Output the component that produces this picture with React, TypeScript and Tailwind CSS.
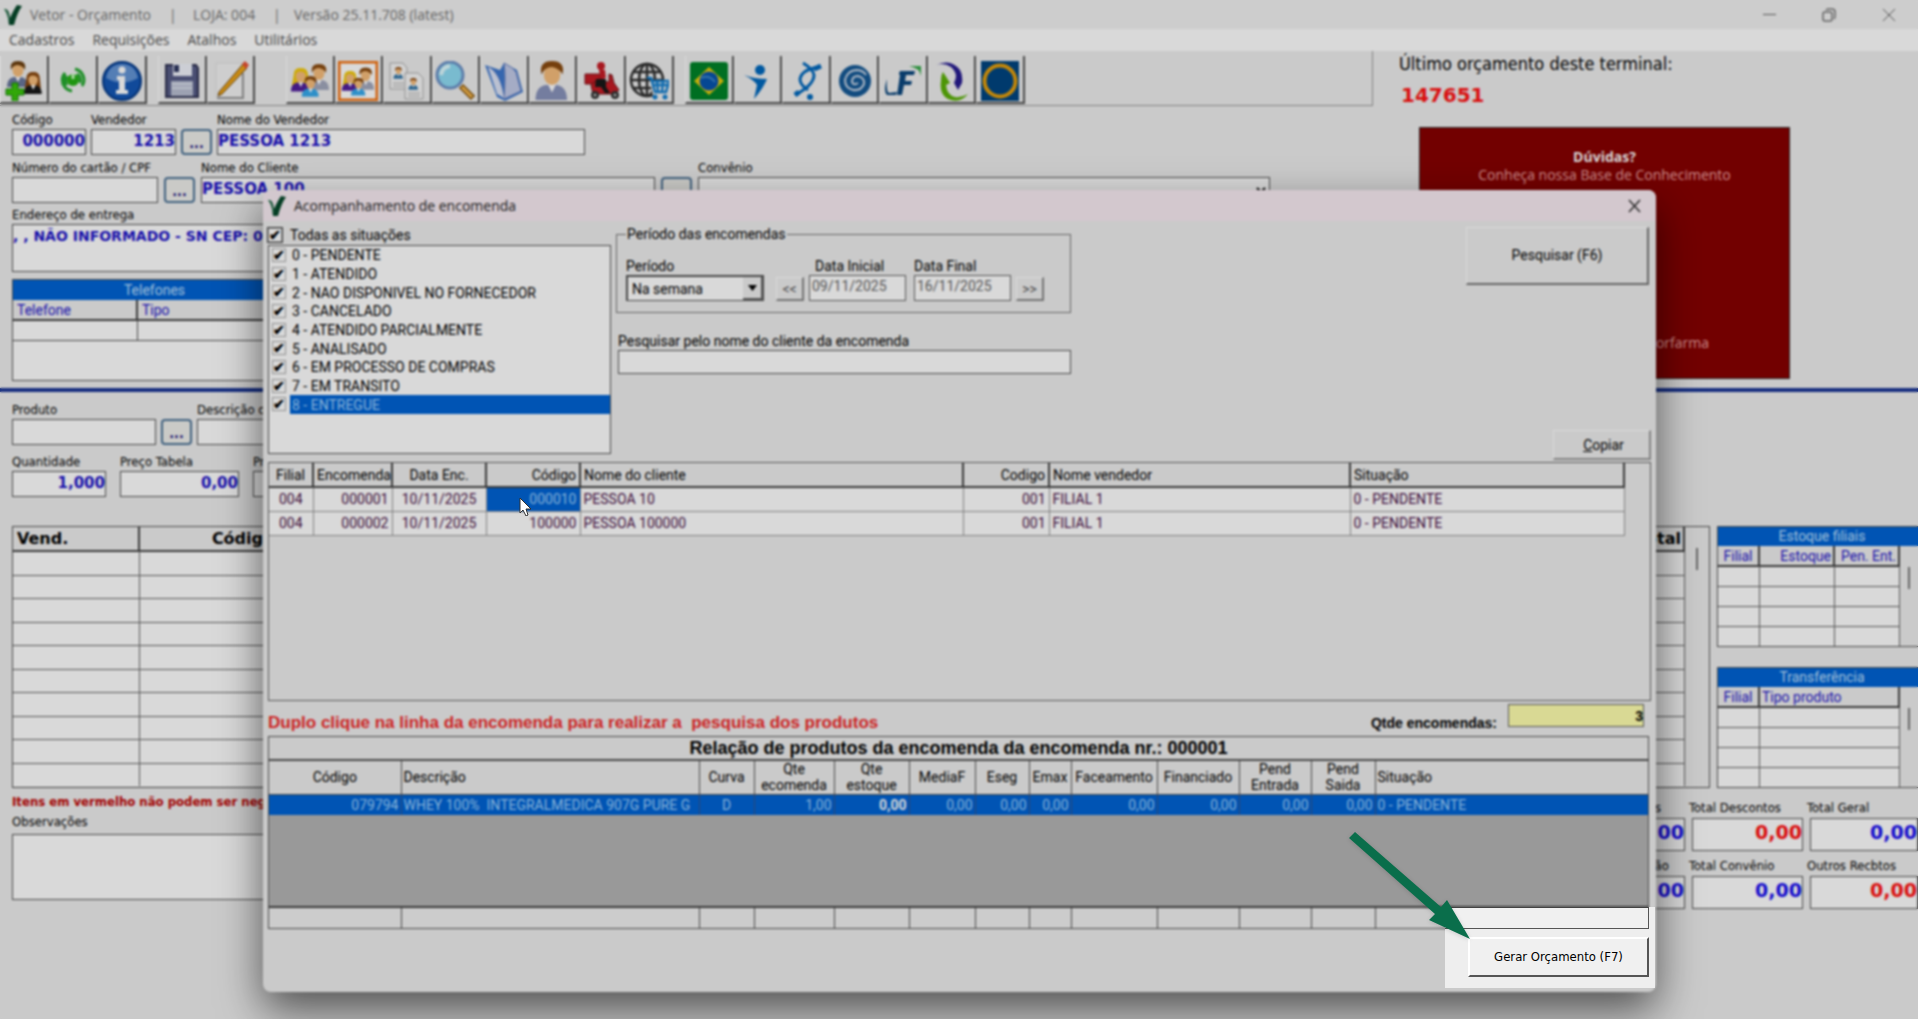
import type { ReactNode } from 'react'
import { clsx } from 'clsx'

const tahoma = "font-['DejaVu_Sans_Condensed','Noto_Sans',sans-serif]"
const sans = "font-['Roboto','Liberation_Sans',sans-serif]"

const situacoes = [
  '0 - PENDENTE',
  '1 - ATENDIDO',
  '2 - NAO DISPONIVEL NO FORNECEDOR',
  '3 - CANCELADO',
  '4 - ATENDIDO PARCIALMENTE',
  '5 - ANALISADO',
  '6 - EM PROCESSO DE COMPRAS',
  '7 - EM TRANSITO',
  '8 - ENTREGUE',
]

const encomendas = [
  { filial: '004', numero: '000001', data: '10/11/2025', codigo: '000010', cliente: 'PESSOA 10' },
  { filial: '004', numero: '000002', data: '10/11/2025', codigo: '100000', cliente: 'PESSOA 100000' },
]

const colunasProduto = [
  { titulo: 'Código', valor: '079794', w: 'w-[132px]', head: 'text-center', cell: 'text-right' },
  { titulo: 'Descrição', valor: 'WHEY 100%  INTEGRALMEDICA 907G PURE G', w: '', head: 'text-left', cell: 'text-left' },
  { titulo: 'Curva', valor: 'D', w: 'w-[55px]', head: 'text-center', cell: 'text-center' },
  { titulo: 'Qte ecomenda', valor: '1,00', w: 'w-[80px]', head: 'text-center', cell: 'text-right' },
  { titulo: 'Qte estoque', valor: '0,00', w: 'w-[75px]', head: 'text-center', cell: 'text-right font-bold text-white' },
  { titulo: 'MediaF', valor: '0,00', w: 'w-[66px]', head: 'text-center', cell: 'text-right' },
  { titulo: 'Eseg', valor: '0,00', w: 'w-[54px]', head: 'text-center', cell: 'text-right' },
  { titulo: 'Emax', valor: '0,00', w: 'w-[42px]', head: 'text-center', cell: 'text-right' },
  { titulo: 'Faceamento', valor: '0,00', w: 'w-[86px]', head: 'text-center', cell: 'text-right' },
  { titulo: 'Financiado', valor: '0,00', w: 'w-[82px]', head: 'text-center', cell: 'text-right' },
  { titulo: 'Pend Entrada', valor: '0,00', w: 'w-[72px]', head: 'text-center', cell: 'text-right' },
  { titulo: 'Pend Saida', valor: '0,00', w: 'w-[64px]', head: 'text-center', cell: 'text-right' },
  { titulo: 'Situação', valor: '0 - PENDENTE', w: 'w-[273px]', head: 'text-left', cell: 'text-left' },
]

export default function App() {
  return (
    <div className={clsx('relative h-screen overflow-hidden bg-[#eeeeee] text-sm text-black', tahoma)}>
      <TitleBar />
      <nav className="flex h-[22px] items-center gap-[18px] bg-white pl-[9px] font-['Open_Sans',sans-serif] text-sm text-[#555]">
        <button>Cadastros</button>
        <button>Requisições</button>
        <button>Atalhos</button>
        <button>Utilitários</button>
      </nav>

      <div className="flex">
        <div className="min-w-0 flex-1">
          <Toolbar />
          <CustomerForm />
        </div>
        <HelpPanel />
      </div>

      <div className="mt-[7px] h-1 bg-[#1a3696]" />

      <ProductArea />
      <OrderDialog />

      {/* Dimmed layer with an opening over the highlighted button */}
      <div className="pointer-events-none absolute inset-0 bg-black/15 backdrop-blur-[1px] [clip-path:polygon(evenodd,0_0,100%_0,100%_100%,0_100%,0_0,calc(100%-473px)_907px,calc(100%-263px)_907px,calc(100%-263px)_988px,calc(100%-473px)_988px,calc(100%-473px)_907px,0_0)]" />
      <svg className="pointer-events-none absolute top-[828px] right-[440px] h-[120px] w-[136px] drop-shadow-sm" viewBox="0 0 136 120" fill="#0a6e4b">
        <path d="M13 4 99 79 105 72 128 111 87 92 93 86 7 10Z" />
      </svg>
    </div>
  )
}

function TitleBar() {
  return (
    <header className="flex h-[29px] items-center bg-[#f1f1f1] pl-1 font-['Open_Sans',sans-serif] text-sm text-[#777]">
      <Check />
      <h1 className="ml-2 flex whitespace-pre">
        <span className="w-[139px]">Vetor - Orçamento</span>
        <span className="w-[24px]">|</span>
        <span className="w-[80px]">LOJA: 004</span>
        <span className="w-[21px]">|</span>
        <span>Versão 25.11.708 (latest)</span>
      </h1>
      <div className="ml-auto flex items-center gap-[46px] pr-[23px]">
        <button aria-label="Minimizar">
          <svg width="13" height="14" stroke="#666" fill="none"><path d="M0 6.500h13" /></svg>
        </button>
        <button aria-label="Restaurar">
          <svg width="14" height="14" stroke="#777" fill="none" strokeWidth="1.500"><rect x="1" y="4" width="9" height="9" rx="2" /><path d="M4 2q1-1 3-1h3q3 0 3 3v4q0 2-1 3" /></svg>
        </button>
        <button aria-label="Fechar">
          <svg width="13" height="14" stroke="#666" fill="none"><path d="M1 1l12 12M13 1 1 13" /></svg>
        </button>
      </div>
    </header>
  )
}

function Check() {
  return (
    <svg width="18" height="20" viewBox="0 0 18 20">
      <path d="M0 4q5-1 6 9Q10 4 13 0l5 1Q13 8 10 20H5Q4 9 0 4Z" fill="#07492b" />
      <path d="M0 4q4 2 5 12" fill="none" stroke="#57a27a" strokeWidth="1" />
    </svg>
  )
}

function ToolGroup({ className, icons }: { className: string; icons: [string, ReactNode][] }) {
  return (
    <div className={clsx('flex h-12', className)}>
      {icons.map(([name, icon]) => (
        <button
          key={name}
          aria-label={name}
          className="flex flex-1 items-center justify-center border-r-2 border-b-2 border-l border-r-[#555] border-b-[#555] border-l-white pt-1"
        >
          <svg className="h-10 w-10" viewBox="0 0 40 40">{icon}</svg>
        </button>
      ))}
    </div>
  )
}

function Toolbar() {
  return (
    <div className="flex h-[55px] items-end border-r border-b border-[#999] pb-px">
      <ToolGroup
        className="w-[147px]"
        icons={[
          ['Novo cliente', <><Person x={2} y={0} hair="#6b3f10" body="#69779c" /><Person x={19} y={11} s={0.85} hair="#8a4a12" body="#181818" long /><path d="M8 22h6v6h6v6h-6v6H8v-6H2v-6h6z" fill="#3bc50b" stroke="#14820a" /></>],
          ['Atualizar', <><circle cx="20" cy="19" r="6" fill="#25b014" /><path d="M20 13v5" stroke="#c8ffc0" strokeWidth="3" /><path d="M12 12a11 11 0 0 0 7 18M29 25a11 11 0 0 0-7-17M12 12q-3 6-2 12M14 24a8 8 0 0 1 0-9M27 22a8 8 0 0 0-3-9" fill="none" stroke="#25a82f" strokeWidth="3" /></>],
          ['Informações', <><circle cx="20" cy="20" r="19" fill="#1457b5" stroke="#073b88" strokeWidth="2" /><path d="M4 17Q7 3 20 3t16 14q-16 9-32 0Z" fill="#85aee2" opacity=".7" /><circle cx="20" cy="9" r="3.500" fill="#fff" /><path d="M15 15h8v14h3v4H14v-4h3V19h-2z" fill="#fff" /></>],
        ]}
      />
      <ToolGroup
        className="ml-[11px] w-[97px]"
        icons={[
          ['Salvar', <><path d="M4 4h30l2 3v29H4z" fill="#575d87" stroke="#303352" strokeWidth="2" /><path d="M11 3h19v12H11z" fill="#f0f3fb" /><path d="M12 4h5v7h-5z" fill="#303962" /><path d="M9 20h22v15H9z" fill="#b9bfd2" /><path d="M10 23h20M10 27h20" stroke="#d8dcea" strokeWidth="2" /></>],
          ['Editar', <><path d="M6 2h26v34H6z" fill="#f3f3f3" stroke="#ddd" /><path d="M7 37h26V12" stroke="#999" strokeWidth="2" fill="none" /><path d="M9 31 33 3l4 4-25 26-4 2z" fill="#eda416" stroke="#6a4511" /><path d="m32 3 3-3 4 4-3 4z" fill="#e85133" /></>],
        ]}
      />
      <ToolGroup
        className="ml-[31px] w-[388px]"
        icons={[
          ['Clientes', <Family />],
          ['Grupo de clientes', <><rect x="1" y="1" width="38" height="38" fill="#fff" stroke="#f57412" strokeWidth="3" /><g transform="translate(3 4) scale(.85)"><Family /></g></>],
          ['Copiar cadastro', <><path d="M3 2h13l4 5v21H3z" fill="#f7f7f7" stroke="#aaa" /><g transform="translate(6 6) scale(.45)"><Person x={0} y={0} hair="#8a4a12" body="#3577a8" /></g><path d="M18 12h13l5 5v21H18z" fill="#f7f7f7" stroke="#aaa" /><g transform="translate(21 17) scale(.45)"><Person x={0} y={0} hair="#8a4a12" body="#3577a8" /></g><path d="M6 22h11M6 25h11M21 32h12M21 35h12" stroke="#aaa" /></>],
          ['Pesquisar', <><path d="m26 25 12 12" stroke="#8c5b13" strokeWidth="6" /><path d="m27 26 10 10" stroke="#f5b74d" strokeWidth="3" /><circle cx="15" cy="14" r="13" fill="#8fdcf4" stroke="#6e94c8" strokeWidth="3" /><path d="M6 14Q7 6 15 5" stroke="#dffaff" strokeWidth="4" fill="none" /></>],
          ['Catálogo', <><path d="M1 4 13 36l8 4 18-9L33 9 20 2l-4 7z" fill="#3f78ce" /><path d="M4 6q12 5 16 31Q22 15 20 2q9 4 12 9l5 19-17 8Z" fill="#c2cae8" stroke="#6b84bf" /><path d="m4 6 9 27 7 4Q16 12 4 6Z" fill="#dce3f6" /></>],
          ['Pessoa', <g transform="translate(2 0) scale(1.500)"><Person x={0} y={0} hair="#8a4b10" body="#8993bb" /></g>],
          ['Entrega', <><path d="M4 13h15v10H4z" fill="#c51c25" stroke="#7a1218" /><circle cx="20" cy="5" r="4" fill="#c51c25" /><path d="m18 8 6 1 1 8-6 2z" fill="#c51c25" /><path d="M10 24q2-4 8-4l10 1v-8l3 1 2 8 5 7-5 4H12z" fill="#c51c25" stroke="#681015" /><path d="M15 18h10v8l4 6h-5l-4-6h-6z" fill="#181818" /><circle cx="14" cy="34" r="4" fill="#333" /><circle cx="34" cy="34" r="4" fill="#333" /><circle cx="14" cy="34" r="1.500" fill="#bbb" /><circle cx="34" cy="34" r="1.500" fill="#bbb" /></>],
          ['Loja virtual', <><g fill="none" stroke="#303030" strokeWidth="2.500"><circle cx="18" cy="19" r="16" /><ellipse cx="18" cy="19" rx="8" ry="16" /><path d="M18 3v32M2 19h32M5 11h26M5 27h26" /></g><path d="M21 20h20l-4 15H24z" fill="#eee" /><path d="M18 17h4l4 14h11l3-11H23m1 4h14M28 20l1 11m5-11-1 11" fill="none" stroke="#1680cf" strokeWidth="2.500" /><circle cx="26" cy="36" r="2.500" fill="#1680cf" /><circle cx="36" cy="36" r="2.500" fill="#1680cf" /></>],
        ]}
      />
      <ToolGroup
        className="ml-[11px] w-[340px]"
        icons={[
          ['Farmácia Popular', <><rect x="1" y="1" width="38" height="38" rx="3" fill="#008329" /><path d="m20 6 15 14-15 14L5 20z" fill="#e9cd0d" /><circle cx="20" cy="20" r="9.500" fill="#0754ad" /><path d="M12 17q8-4 14 4" stroke="#4088ca" strokeWidth="2" fill="none" /></>],
          ['Convênio esportivo', <g fill="#0068bd"><circle cx="23" cy="9" r="5" /><path d="M7 14q10 4 23 4-3 8-13 20l3-14Q17 19 7 14Z" /></g>],
          ['Convênio saúde', <g fill="none" stroke="#0068bd"><path d="M34 6Q16 8 14 18q0 6 8 11" strokeWidth="3" /><path d="M17 2q10 6 11 12 0 10-19 20" strokeWidth="3" /><path d="m28 8 7-3M9 34l4-3" strokeWidth="5" /><circle cx="24" cy="36" r="1.500" strokeWidth="3" /></g>],
          ['Convênio espiral', <><circle cx="20" cy="20" r="16" fill="#155996" /><path d="M23 22q-4 3-6-1 0-6 6-6 7 2 6 8-3 7-11 6-8-2-8-10 2-9 11-10 7 0 10 5" fill="none" stroke="#c9d6e6" strokeWidth="2" /></>],
          ['Convênio LF', <><path d="M17 10h15l-1 4h-8l-1 6h7l-1 4h-7l-2 10h-5l3-20q-2 0 0-4Z" fill="#0b477e" /><path d="M4 18q-1 13 2 14l8-1-1 3H4q-4-4 0-16Z" fill="#0b477e" /><path d="M26 5h12v10q-1-8-12-10Z" fill="#36a849" /></>],
          ['Convênio ciclo', <><path d="M4 4Q19-3 28 9q3 5 2 13l-4 7-4-7q5-9-3-16-7-5-15-2Z" fill="#271c91" /><path d="M11 11q4 6 7 11l-4 2q1 10 9 12 6 1 13-3-8 10-20 5Q7 33 9 20 9 14 11 11Z" fill="#5bb008" /></>],
          ['Convênio anel', <><path d="M1 0h38v40H1z" fill="#004580" /><circle cx="20" cy="20" r="15.500" fill="none" stroke="#e59f0b" strokeWidth="4" /></>],
        ]}
      />
    </div>
  )
}

type PersonProps = { x: number; y: number; s?: number; hair: string; body: string; long?: boolean }

function Person({ x, y, s = 1, hair, body, long }: PersonProps) {
  return (
    <g transform={`translate(${x} ${y}) scale(${s})`}>
      {long && <path d="M4 8q0-8 8-8t8 9l1 11H2Z" fill={hair} />}
      <path d="M1 26q0-9 7-10h7q7 1 7 10Z" fill={body} />
      <path d="m9 15 3 6 3-6" fill="#fff" />
      <ellipse cx="12" cy="9" rx="5.500" ry="7" fill="#f6bd7c" />
      <path d="M5 9Q3 0 12 0t7 9q-2-4-7-5-5 0-7 5Z" fill={hair} />
    </g>
  )
}

function Family() {
  return (
    <>
      <Person x={17} y={3} hair="#8a4b10" body="#a3a8bd" />
      <Person x={0} y={7} s={0.9} hair="#f2c910" body="#51209b" long />
      <Person x={11} y={15} s={0.8} hair="#8a4b10" body="#36a9ec" />
    </>
  )
}

type FieldProps = { label: string; value?: string; className?: string; right?: boolean }

function Field({ label, value = '', className, right }: FieldProps) {
  return (
    <label className={clsx('flex flex-col whitespace-nowrap', className)}>
      <span className="mb-px h-4 text-[13px] leading-4">{label}</span>
      <input
        defaultValue={value}
        className={clsx(
          "h-[26px] w-full border border-[#555] bg-white pb-0.5 font-['DejaVu_Sans',sans-serif] text-[15px] font-bold text-[#1c12c8]",
          right && 'text-right',
        )}
      />
    </label>
  )
}

function MoreButton() {
  return (
    <button className="flex h-[26px] w-[31px] shrink-0 items-end justify-center rounded border-2 border-[#4d7396] bg-[#eeeeea] font-bold leading-5 text-[#1c127f]">
      ...
    </button>
  )
}

function CustomerForm() {
  return (
    <form className="pt-1.5 pl-3">
      <div className="flex items-end gap-[5px]">
        <Field label="Código" value="000000" className="w-[74px]" right />
        <Field label="Vendedor" value="1213" className="w-[85px]" right />
        <MoreButton />
        <Field label="Nome do Vendedor" value="PESSOA 1213" className="w-[368px]" />
      </div>
      <div className="mt-[5px] flex items-end gap-1.5 pr-[103px]">
        <Field label="Número do cartão / CPF" className="w-[146px]" />
        <MoreButton />
        <Field label="Nome do Cliente" value="PESSOA 100" className="w-[454px]" />
        <MoreButton />
        <label className="flex flex-1 flex-col">
          <span className="mb-px h-4 text-[13px] leading-4">Convênio</span>
          <select className="h-[26px] w-full border border-[#555] bg-white" />
        </label>
      </div>
      <label className="mt-1 flex flex-col">
        <span className="mb-px h-4 text-[13px] leading-4">Endereço de entrega</span>
        <textarea
          defaultValue=", , NÃO INFORMADO - SN CEP: 00000-000"
          className="h-12 w-[700px] resize-none border border-[#555] bg-white font-['DejaVu_Sans',sans-serif] text-sm leading-[22px] font-bold text-[#1c12c8]"
        />
      </label>
      <div className={clsx('mt-[7px] h-[102px] w-[285px] border border-[#555] bg-white', sans)}>
        <table className="w-full table-fixed border-collapse text-sm leading-[18px] text-[#1c12c8]">
          <caption className="h-5 bg-[#0063d4] leading-5 text-[#bfe0ff]">Telefones</caption>
          <thead>
            <tr className="h-5 border-b-2 border-[#444] bg-[#eee]">
              <th className="w-[124px] border-r-2 border-[#444] pl-1 text-left font-normal">Telefone</th>
              <th className="pl-1 text-left font-normal">Tipo</th>
            </tr>
          </thead>
          <tbody>
            <tr className="h-5 border-b border-[#555]">
              <td className="border-r border-[#555]" />
              <td />
            </tr>
          </tbody>
        </table>
      </div>
    </form>
  )
}

function HelpPanel() {
  return (
    <aside className="w-[545px] shrink-0 pl-[26px]">
      <p className="pt-px text-lg leading-6">Último orçamento deste terminal:</p>
      <p className="mt-[7px] pl-0.5 font-['DejaVu_Sans',sans-serif] text-xl leading-6 font-bold text-[#ff1212]">147651</p>
      <div className="mt-5 ml-5 flex h-[252px] w-[371px] flex-col items-center border border-[#333] bg-[#870000] pt-5 font-['Open_Sans',sans-serif] text-sm leading-[18px] text-[#f0a8a8]">
        <b className="text-white">Dúvidas?</b>
        <a href="#base">Conheça nossa Base de Conhecimento</a>
        <a href="#site" className="mt-auto mr-[80px] mb-[26px] self-end">vetorfarma</a>
      </div>
    </aside>
  )
}

function Thumb() {
  return <div className="mx-auto mt-[21px] h-[22px] w-0.5 bg-[#777]" />
}

function SideTable({ title, columns }: { title: string; columns: { label: string; className: string }[] }) {
  return (
    <div className={clsx('border-y border-l border-[#555] text-sm', sans)}>
      <h2 className="h-[19px] bg-[#0063d4] pl-2 text-center leading-[19px] text-[#bfe0ff]">{title}</h2>
      <div className="flex">
        <table className="flex-1 table-fixed border-collapse whitespace-nowrap text-[#1c12c8]">
          <thead>
            <tr className="h-5 border-b-2 border-[#444]">
              {columns.map((c) => (
                <th key={c.label} className={clsx('border-r-2 border-[#444] px-0.5 leading-[18px] font-normal', c.className)}>{c.label}</th>
              ))}
            </tr>
          </thead>
          <tbody>
            {[0, 1, 2, 3].map((r) => (
              <tr key={r} className="h-5 border-b border-[#666] bg-white last:border-b-0">
                {columns.map((c) => (
                  <td key={c.label} className="border-r border-[#666]" />
                ))}
              </tr>
            ))}
          </tbody>
        </table>
        <div className="w-[18px]"><Thumb /></div>
      </div>
    </div>
  )
}

function Total({ label, className, color }: { label: string; className?: string; color: string }) {
  return (
    <label className="flex flex-col whitespace-nowrap">
      <span className={clsx('-ml-[3px] h-[18px] text-[13px] leading-4', className)}>{label}</span>
      <input
        defaultValue="0,00"
        className={clsx("h-[33px] w-full border border-[#555] bg-white pb-1.5 text-right font-['DejaVu_Sans',sans-serif] text-[19px] font-bold", color)}
      />
    </label>
  )
}

function ProductArea() {
  return (
    <main className="pl-3">
      <div className="mt-2.5 flex items-end gap-[5px]">
        <Field label="Produto" className="w-[144px]" />
        <MoreButton />
        <Field label="Descrição do produto" className="w-[500px]" />
      </div>
      <div className="mt-[9px] flex gap-3.5">
        <Field label="Quantidade" value="1,000" className="w-[94px]" right />
        <Field label="Preço Tabela" value="0,00" className="w-[119px]" right />
        <Field label="Preço Venda" value="0,00" className="w-[119px]" right />
      </div>

      <div className="mt-[29px] flex gap-[7px]">
        <div className="flex h-[262px] min-w-0 flex-1 items-start overflow-hidden border border-[#555]">
          <table className="flex-1 table-fixed border-collapse font-['DejaVu_Sans',sans-serif] text-base leading-[22px]">
            <thead>
              <tr className="h-[24px] border-b-2 border-[#444]">
                <th className="w-[126px] border-r-2 border-[#444] pl-1 text-left">Vend.</th>
                <th className="w-[140px] border-r-2 border-[#444] pr-1 text-right">Código</th>
                <th className="border-r-2 border-[#444]" />
                <th className="w-[120px] border-r-2 border-[#444] pr-0.5 text-right">Total</th>
              </tr>
            </thead>
            <tbody>
              {Array.from({ length: 10 }, (_, r) => (
                <tr key={r} className="h-6 border-b border-[#666] bg-white even:h-[23px] last:border-b-0">
                  <td className="border-r border-[#666]" />
                  <td className="border-r border-[#666]" />
                  <td className="border-r border-[#666]" />
                  <td className="border-r border-[#666]" />
                </tr>
              ))}
            </tbody>
          </table>
          <div className="w-6"><Thumb /></div>
        </div>
        <div className="flex w-[201px] flex-col justify-between">
          <SideTable
            title="Estoque filiais"
            columns={[
              { label: 'Filial', className: 'w-[41px]' },
              { label: 'Estoque', className: 'w-[75px] text-right' },
              { label: 'Pen. Ent.', className: 'text-right' },
            ]}
          />
          <SideTable
            title="Transferência"
            columns={[
              { label: 'Filial', className: 'w-[41px]' },
              { label: 'Tipo produto', className: 'text-left' },
            ]}
          />
        </div>
      </div>

      <div className="mt-1 flex justify-between">
        <div className="w-[700px]">
          <p className="text-[13px] leading-5 font-bold text-[#be0000]">Itens em vermelho não podem ser negociados</p>
          <label className="flex flex-col">
            <span className="mb-0.5 h-5 text-[13px] leading-5">Observações</span>
            <textarea className="h-[66px] resize-none border border-[#555] bg-white" />
          </label>
        </div>
        <div className="grid grid-cols-[111px_111px_108px] gap-[7px] pt-2">
          <Total label="Total Produtos" className="pr-6 text-right" color="text-[#1c12f0]" />
          <Total label="Total Descontos" color="text-[#ff1212]" />
          <Total label="Total Geral" color="text-[#1c12f0]" />
          <Total label="Desconto Cartão" className="pr-5 text-right" color="text-[#1c12f0]" />
          <Total label="Total Convênio" color="text-[#1c12f0]" />
          <Total label="Outros Recbtos" color="text-[#ff1212]" />
        </div>
      </div>
    </main>
  )
}

function OrderDialog() {
  return (
    <section
      role="dialog"
      aria-label="Acompanhamento de encomenda"
      className={clsx(
        'absolute top-[190px] right-[262px] left-[263px] overflow-hidden rounded-lg bg-[#eeeeee] pb-[15px] text-sm leading-[18px] shadow-[0_18px_44px_rgba(0,0,0,0.6)]',
        sans,
      )}
    >
      <header className="flex h-[31px] items-center bg-[#f8ebf2] pr-[15px] pl-[5px] font-['Open_Sans',sans-serif] text-sm text-[#222]">
        <Check />
        <h2 className="ml-2 flex-1">Acompanhamento de encomenda</h2>
        <button aria-label="Fechar janela">
          <svg width="13" height="14" stroke="#333" strokeWidth="1.500"><path d="M1 1l11 12M12 1 1 13" /></svg>
        </button>
      </header>

      <div className="px-[5px]">
        <div className="flex h-[241px]">
          <StatusFilter />
          <PeriodFilter />
          <div className="ml-auto flex flex-col items-end justify-between pt-1.5 pb-0.5">
            <button className="mr-0.5 h-[58px] w-[183px] border-t border-r-2 border-b-2 border-l border-t-white border-r-[#777] border-b-[#777] border-l-white pb-0.5">
              Pesquisar (F6)
            </button>
            <button className="h-[30px] w-[98px] border-t border-r-2 border-b-2 border-l border-t-white border-r-[#999] border-b-[#999] border-l-white pl-1">
              <u>C</u>opiar
            </button>
          </div>
        </div>

        <OrderGrid />

        <div className="flex h-[35px] items-center font-['Liberation_Sans',sans-serif] font-bold">
          <p className="flex-1 pt-2 text-[17px] whitespace-pre text-[#f02828]">
            Duplo clique na linha da encomenda para realizar a  pesquisa dos produtos
          </p>
          <label htmlFor="qtde" className="pt-2">Qtde encomendas:</label>
          <input id="qtde" defaultValue="3" className="mr-[7px] mb-1.5 ml-[11px] h-[23px] w-[136px] border border-[#666] bg-[#ffffae] text-right font-bold" />
        </div>

        <ProductGrid />

        <div className="mt-2 flex justify-end pr-0.5">
          <button className="h-10 w-[181px] border-2 border-t-white border-r-[#555] border-b-[#555] border-l-white bg-[#f0f0f0] font-['DejaVu_Sans_Condensed','Noto_Sans',sans-serif] text-[13px] whitespace-nowrap">
            Gerar Orçamento (F7)
          </button>
        </div>
      </div>
    </section>
  )
}

const checkbox =
  "flex h-[14px] w-[14px] shrink-0 appearance-none items-center justify-center border border-[#aaa] bg-white checked:before:text-[14px] checked:before:leading-[12px] checked:before:font-bold checked:before:content-['✔']"

function StatusFilter() {
  return (
    <div className="w-[343px] shrink-0 pt-[3px]">
      <label className="flex h-[21px] items-center gap-2">
        <input type="checkbox" defaultChecked className={clsx(checkbox, 'outline outline-[#444]')} />
        Todas as situações
      </label>
      <ul className="flex h-[209px] flex-col border border-[#555] bg-white pb-[39px]">
        {situacoes.map((s, i) => (
          <li key={s} className="flex min-h-0 flex-1">
            <label className="flex flex-1 items-stretch gap-1 pl-[3px]">
              <input type="checkbox" defaultChecked className={clsx(checkbox, 'mt-0.5')} />
              <span className={clsx('flex flex-1 items-center pl-0.5', i === 8 && 'bg-[#0063d4] text-[#9fd2ff]')}>{s}</span>
            </label>
          </li>
        ))}
      </ul>
    </div>
  )
}

const bevel = 'h-6 w-7 border-r-2 border-b-2 border-t border-l border-t-white border-l-white border-r-[#888] border-b-[#888] text-[#555]'

function PeriodFilter() {
  return (
    <div className="ml-[5px] w-[455px]">
      <fieldset className="mt-1 h-[88px] border border-[#777] px-[9px] pt-3.5">
        <legend className="px-px">Período das encomendas</legend>
        <div className="flex items-end">
          <label className="mr-3 flex w-[138px] flex-col">
            Período
            <span className="flex h-[26px] items-center border-2 border-r border-b border-[#555] bg-white">
              <select className="min-w-0 flex-1 appearance-none pl-1 outline-none">
                <option>Na semana</option>
              </select>
              <span className="flex h-full w-5 items-center justify-center border-r-2 border-b-2 border-[#666] bg-[#eee]">
                <svg width="9" height="6"><path d="M0 0h9L4.500 6z" /></svg>
              </span>
            </span>
          </label>
          <button className={bevel}>&lt;&lt;</button>
          <label className="ml-[5px] flex w-[97px] flex-col">
            <span className="pl-1.5">Data Inicial</span>
            <input defaultValue="09/11/2025" className="h-[26px] w-full border border-[#666] bg-white pb-1 pl-0.5 text-[#666]" />
          </label>
          <label className="ml-2 flex w-[97px] flex-col">
            Data Final
            <input defaultValue="16/11/2025" className="h-[26px] w-full border border-[#666] bg-white pb-1 pl-0.5 text-[#666]" />
          </label>
          <button className={clsx(bevel, 'ml-[5px]')}>&gt;&gt;</button>
        </div>
      </fieldset>
      <label className="mt-[19px] ml-0.5 flex flex-col">
        Pesquisar pelo nome do cliente da encomenda
        <input className="h-6 w-full border border-[#555] bg-white" />
      </label>
    </div>
  )
}

function OrderGrid() {
  const th = 'border-r-2 border-[#444] px-[3px] font-normal'
  const td = 'border-r border-[#999] px-[3px]'
  return (
    <div className="h-[239px] border border-[#666] pr-[25px]">
      <table className="w-full table-fixed border-collapse">
        <thead>
          <tr className="h-[24px] border-b-2 border-[#444]">
            <th className={clsx(th, 'w-[44px]')}>Filial</th>
            <th className={clsx(th, 'w-[79px] text-right')}>Encomenda</th>
            <th className={clsx(th, 'w-[94px]')}>Data Enc.</th>
            <th className={clsx(th, 'w-[94px] text-right')}>Código</th>
            <th className={clsx(th, 'text-left')}>Nome do cliente</th>
            <th className={clsx(th, 'w-[86px] text-right')}>Codigo</th>
            <th className={clsx(th, 'w-[301px] text-left')}>Nome vendedor</th>
            <th className={clsx(th, 'w-[274px] text-left')}>Situação</th>
          </tr>
        </thead>
        <tbody className="text-[#4b1248]">
          {encomendas.map((e, i) => (
            <tr key={e.numero} className="h-[24px] border-b border-[#999] bg-white">
              <td className={clsx(td, 'text-center')}>{e.filial}</td>
              <td className={clsx(td, 'text-right')}>{e.numero}</td>
              <td className={clsx(td, 'text-center')}>{e.data}</td>
              <td className={clsx(td, 'relative text-right', i === 0 && 'bg-[#0063d4] text-[#9fd2ff]')}>
                {e.codigo}
                {i === 0 && (
                  <svg className="absolute top-[9px] left-[32px] z-10" width="12" height="19" viewBox="0 0 12 19">
                    <path d="M1 1v15l3-3 3 6 2-1-2-6h5Z" fill="#fff" stroke="#333" />
                  </svg>
                )}
              </td>
              <td className={td}>{e.cliente}</td>
              <td className={clsx(td, 'text-right')}>001</td>
              <td className={td}>FILIAL 1</td>
              <td className={td}>0 - PENDENTE</td>
            </tr>
          ))}
        </tbody>
      </table>
    </div>
  )
}

function ProductGrid() {
  return (
    <div className="mr-0.5 border border-[#555] bg-[#b4b4b4]">
      <table className="w-full table-fixed border-collapse">
        <caption className="h-[22px] bg-[#eee] font-['Liberation_Sans',sans-serif] text-lg leading-[22px] font-bold">
          Relação de produtos da encomenda da encomenda nr.: 000001
        </caption>
        <thead>
          <tr className="h-[34px] border-t-2 border-b border-[#555] bg-[#eee]">
            {colunasProduto.map((c) => (
              <th key={c.titulo} className={clsx('border-r border-[#555] px-0.5 leading-4 font-normal last:border-r-0', c.w, c.head)}>
                {c.titulo.includes('Qte') ? <>Qte<br />{c.titulo.slice(4)}</> : c.titulo}
              </th>
            ))}
          </tr>
        </thead>
        <tbody>
          <tr className="h-[21px] bg-[#0063d4] text-[#9fd2ff]">
            {colunasProduto.map((c) => (
              <td key={c.titulo} className={clsx('overflow-hidden border-r border-[#33558a] px-0.5 whitespace-pre last:border-r-0', c.cell)}>{c.valor}</td>
            ))}
          </tr>
        </tbody>
        <tfoot>
          <tr className="h-[92px] border-b-2 border-[#444]">
            <td colSpan={13} />
          </tr>
          <tr className="h-[21px] bg-[#f0f0f0]">
            {colunasProduto.map((c) => (
              <td key={c.titulo} className="border-r border-[#555] last:border-r-0" />
            ))}
          </tr>
        </tfoot>
      </table>
    </div>
  )
}
